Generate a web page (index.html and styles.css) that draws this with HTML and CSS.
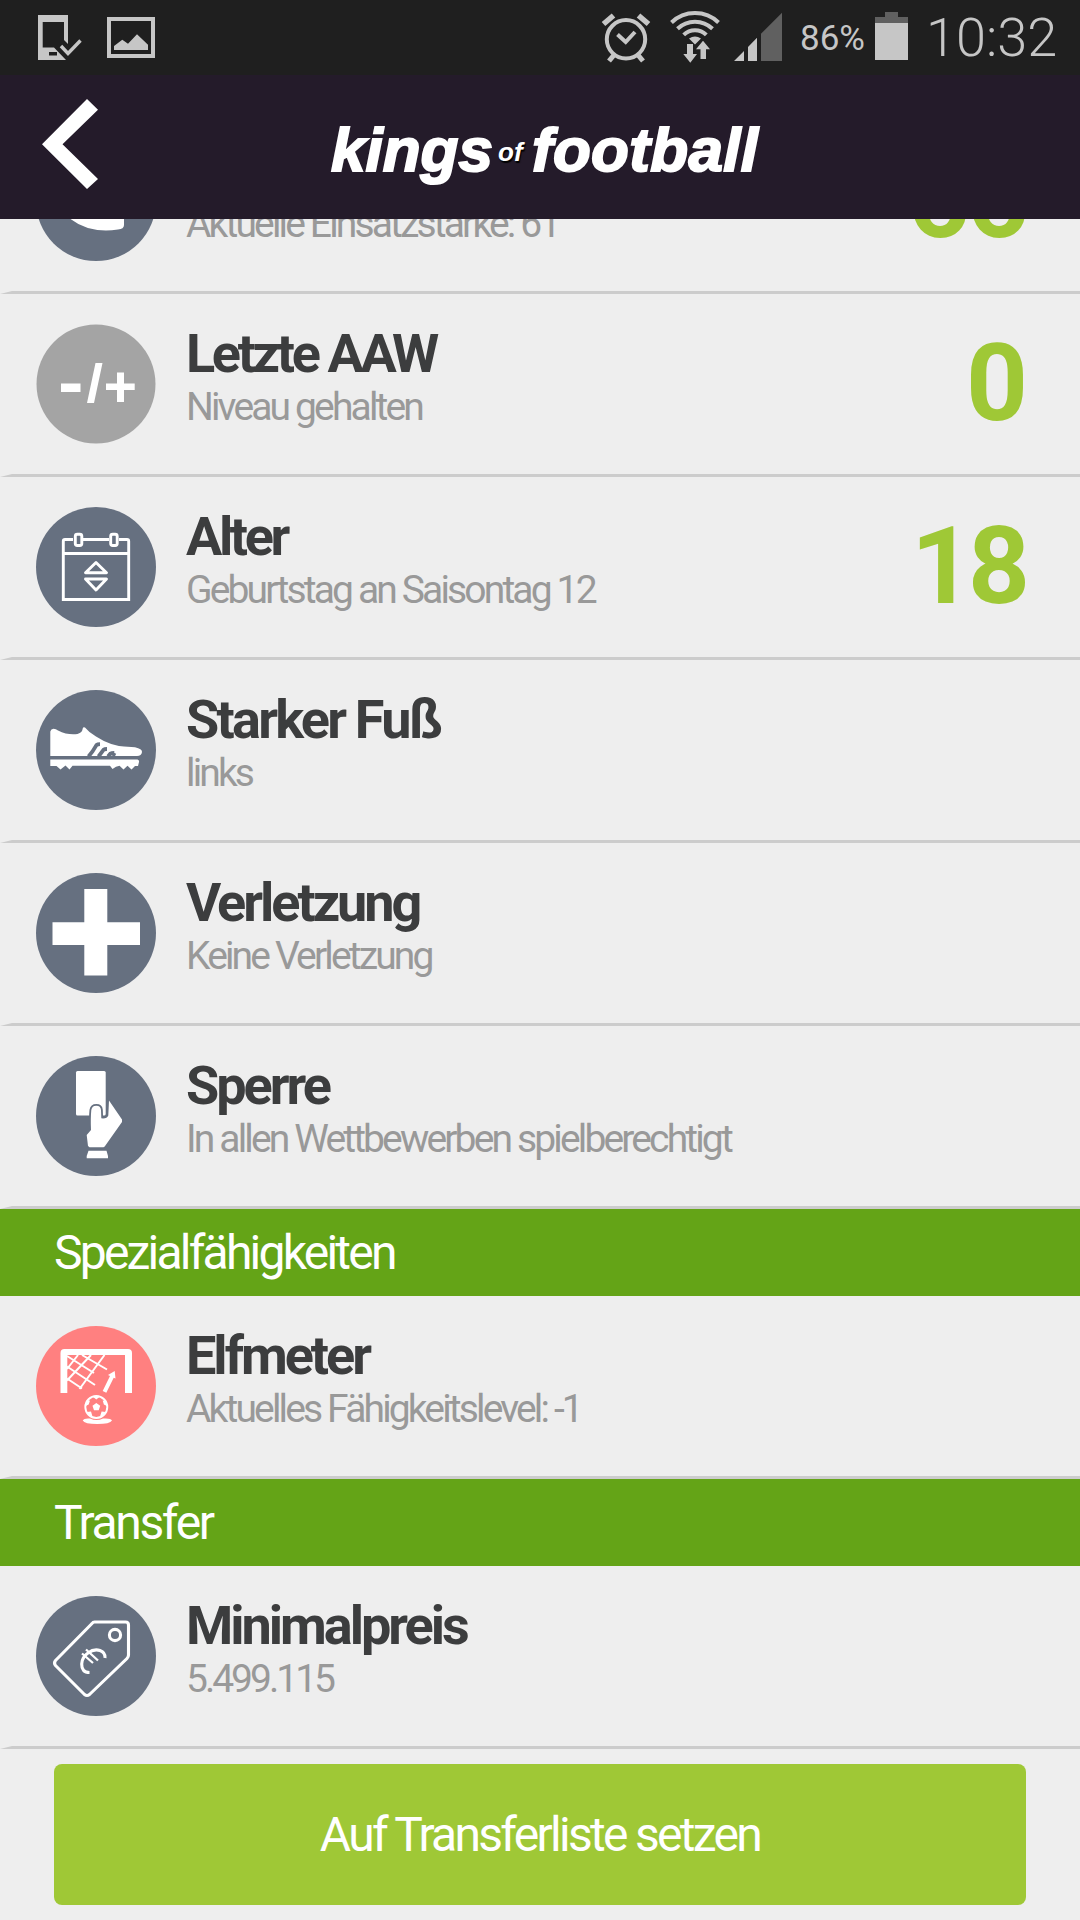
FILE: index.html
```html
<!DOCTYPE html>
<html lang="de">
<head>
<meta charset="utf-8">
<title>Kings of Football</title>
<link rel="stylesheet" href="styles.css">
</head>
<body>
<div class="screen">
  <div class="statusbar">
    <svg class="status-left" width="180" height="75" viewBox="0 0 180 75">
      <path fill="#c6c6c6" fill-rule="evenodd" d="M38 15H68V44L64 40V22H42.7V47.500H54L66 60H38ZM49 52V55.500H57V52Z"/>
      <path fill="none" stroke="#c6c6c6" stroke-width="3.400" d="M61 46L68 53.500L80.500 40.500"/>
      <rect x="109" y="19" width="44" height="37" fill="none" stroke="#c6c6c6" stroke-width="4"/>
      <path fill="#c6c6c6" d="M114 50V46L122.300 39.700L128 43.700L137 34.300L148 44.700V50Z"/>
    </svg>
    <div class="status-right">
      <svg width="185" height="75" viewBox="600 0 185 75">
        <g fill="none" stroke="#c6c6c6">
          <circle cx="626" cy="39.300" r="19.200" stroke-width="4"/>
          <path stroke-width="4" d="M617.500 34.500L625.700 42L635 32"/>
          <path stroke-width="5.500" d="M603.500 24L613.500 15.500M648.500 24L638.500 15.500"/>
          <path stroke-width="5" d="M614 55L609 61M638 55L643 61"/>
          <path stroke-width="4" d="M671.500 22.500A34 34 0 0 1 718.500 22.500M677.500 28.800A25.200 25.200 0 0 1 712.500 28.800M683.700 34.800A16 16 0 0 1 706.300 34.800"/>
        </g>
        <path fill="#c6c6c6" d="M689 38.500Q695 34.500 701 38.500L695 44.500ZM687 44H693V54H697L690.300 62.700L683.300 54H687ZM703 40.700L710 49.300H706V59H700.500V49.300H696ZM734 61L744 51V61ZM748 61V47L757 37.700V61Z"/>
        <path fill="#606060" d="M761 61V33.700L782 12.700V61Z"/>
      </svg>
      <span class="battery-level">86%</span>
      <svg class="battery" width="33" height="75" viewBox="0 0 33 75">
        <path fill="#606060" d="M10 12H23V17H33V23H0V17H10Z"/>
        <path fill="#c6c6c6" d="M0 23H33V60H0Z"/>
      </svg>
      <span class="clock">10:32</span>
    </div>
  </div>

  <div class="header">
    <svg class="back" width="64" height="144" viewBox="36 75 64 144"><path fill="#fff" d="M87 99L98 109.700L62.500 144.300L98 179L87 189L42 144.300Z"/></svg>
    <div class="logo"><span class="logo-kings">kings</span><span class="logo-of">of</span><span class="logo-football">football</span></div>
  </div>

  <div class="list">
    <div class="row row-scrolled">
      <svg class="icon" viewBox="0 0 120 120"><circle cx="60" cy="60" r="60" fill="#667080"/><path fill="#fff" d="M28 72Q60 76 88 74V84Q88 88 82 88.500Q52 93 32 76Z"/></svg>
      <div class="label"><div class="title">&nbsp;</div><div class="sub">Aktuelle Einsatzstärke: 61</div></div>
      <div class="value">66</div>
    </div>
    <div class="row">
      <svg class="icon" viewBox="0 0 120 120"><circle cx="60" cy="60" r="59.500" fill="#a4a4a4"/><path fill="#fff" d="M25 59.500H44.500V68H25ZM59.500 39H66.500L58 79H51ZM70 59.500H81V48.500H88V59.500H98.700V66H88V78H81V66H70Z"/></svg>
      <div class="label"><div class="title title-tight">Letzte AAW</div><div class="sub">Niveau gehalten</div></div>
      <div class="value value-zero">0</div>
    </div>
    <div class="row">
      <svg class="icon" viewBox="0 0 120 120"><circle cx="60" cy="60" r="60" fill="#667080"/>
        <g fill="none" stroke="#fff" stroke-width="2.900">
          <path d="M37 32.500H29Q27.300 32.500 27.300 34.200V92.500H92.700V34.200Q92.700 32.500 91 32.500H83M47 32.500H73M27.300 46.500H92.700"/>
          <rect x="39.300" y="27.200" width="6.500" height="11.300" rx="2"/><rect x="74.700" y="27.200" width="6.500" height="11.300" rx="2"/>
          <path stroke-linejoin="round" d="M60 55.500L70.500 65.800H49.500ZM60 83L70.500 72H49.500Z"/>
        </g></svg>
      <div class="label"><div class="title title-tight">Alter</div><div class="sub">Geburtstag an Saisontag 12</div></div>
      <div class="value value-narrow">18</div>
    </div>
    <div class="row">
      <svg class="icon" viewBox="0 0 120 120"><circle cx="60" cy="60" r="60" fill="#667080"/>
        <path fill="#fff" d="M14.300 66V41.500Q15 39 17.500 38.800Q20 38.800 22 40.500Q32 45.500 41.500 44Q46.500 42.500 46.700 38.500Q47.300 36.500 49 37.500Q53 42.500 60 46.500Q74 55.500 88 56.500L99 57.300Q106.300 59 106 62Q105.500 66 101 66Z"/>
        <path fill="none" stroke="#667080" stroke-width="3.800" d="M52.500 66.500L56.500 61.500L60.500 55Q61.500 54.200 64 54.200M62.500 66.500L67.500 59.800Q68.500 59 71 59M72 66.500L74.500 63.500Q75.500 62.800 78.300 62.800M77 66L78.500 63"/>
        <path fill="#fff" d="M14.300 69.500H101.500Q103.500 70 103 72L102 76H99L95.500 79.500L91.500 75.700L87.500 79.500L83.500 75.700Q80 76 76.500 79L74 75.700H36.500L33.500 79.500L29.500 75.500L24.500 79.500L20.500 76H14.300Z"/></svg>
      <div class="label"><div class="title title-loose">Starker Fuß</div><div class="sub">links</div></div>
    </div>
    <div class="row">
      <svg class="icon" viewBox="0 0 120 120"><circle cx="60" cy="60" r="60" fill="#667080"/><path fill="#fff" d="M48.300 16H71.300V49.300H104V72H71.300V102.500H48.300V72H16.500V49.300H48.300Z"/></svg>
      <div class="label"><div class="title">Verletzung</div><div class="sub">Keine Verletzung</div></div>
    </div>
    <div class="row">
      <svg class="icon" viewBox="0 0 120 120"><circle cx="60" cy="60" r="60" fill="#667080"/>
        <rect x="40" y="15" width="29.700" height="44.600" rx="1.500" fill="#fff"/>
        <path fill="#fff" stroke="#667080" stroke-width="3.600" paint-order="stroke" d="M55 74Q54.500 62 55.300 54Q56 49.700 60.300 49.700Q64.700 49.700 65 54L65.300 62.300Q71 63 72.300 59.500L73 44.500L86 63.500V66L68.700 90.500L67.500 91.300H53.500L52 90L50.700 79Z"/>
        <path fill="#fff" d="M52.500 94.700H70.500L72 100V102.300H50.700V100Z"/></svg>
      <div class="label"><div class="title">Sperre</div><div class="sub">In allen Wettbewerben spielberechtigt</div></div>
    </div>
    <div class="section">Spezialfähigkeiten</div>
    <div class="row">
      <svg class="icon" viewBox="0 0 120 120"><circle cx="60" cy="60" r="60" fill="#ff8080"/>
        <path fill="#fff" d="M24.500 67V27Q24.500 23 28.500 23H92Q96 23 96 27V67H89V29H31.300V67Z"/>
        <path fill="none" stroke="#fff" stroke-width="2" d="M31 30L58 47M46 29L71 43.500M31 40.500L59 59M31 52.500L46 62.500M31 43L42 29M31 54.500L55 29M43.500 63L68.500 29"/>
        <path fill="#fff" d="M66.700 65L74 50L72 49L78.700 45L79.500 52.500L77.700 51.700L70.300 66.700Z"/>
        <circle cx="60.300" cy="81" r="11" fill="none" stroke="#fff" stroke-width="1.900"/>
        <path fill="#fff" d="M60.300 77L64.200 79.800L62.700 84.300H58L56.500 79.800ZM56.500 70.500H64L60.300 73.500ZM49.500 80L50.500 75L54 74.500L52.700 78.500ZM71 80L70 75L66.700 74.500L67.900 78.500ZM51 86L55 85.500L56.500 90.500H54.500ZM69.600 86L65.600 85.500L64 90.500H66Z"/>
        <path fill="#fff" d="M46.700 94.500Q48 92 54 92.500Q60.500 95.500 67 92.500Q75 92 76 94.500Q74 98 61.300 98Q48.500 98 46.700 94.500Z"/></svg>
      <div class="label"><div class="title">Elfmeter</div><div class="sub">Aktuelles Fähigkeitslevel: -1</div></div>
    </div>
    <div class="section section-loose">Transfer</div>
    <div class="row">
      <svg class="icon" viewBox="0 0 120 120"><circle cx="60" cy="60" r="60" fill="#667080"/>
        <g fill="none" stroke="#fff" stroke-width="3.100">
          <path stroke-linejoin="round" d="M58.500 26H89.500Q92.500 26 92.500 29V59Q92.500 61 91 62.500L53.500 98.500Q51 100.500 48.500 98.500L19.500 69.500Q17.500 67 19.500 64.500L56 27.500Q57 26 58.500 26Z"/>
          <circle cx="79" cy="39" r="5.600"/>
          <path d="M53.500 76.500Q45.500 76.500 45.700 68Q46 61 52 57Q58 52.500 64 54.500Q69.500 56.500 69 62"/>
          <path stroke-width="2.300" d="M46 57.500L57 67M50 53.500L62 64.500"/>
        </g></svg>
      <div class="label"><div class="title">Minimalpreis</div><div class="sub sub-digits">5.499.115</div></div>
    </div>
    <div class="button">Auf Transferliste setzen</div>
  </div>
</div>
</body>
</html>
```
FILE: styles.css
```css
* { box-sizing: border-box; }
body {
  margin: 0;
  background: #eee;
  font-family: Roboto, sans-serif;
}
svg { display: block; flex: none; }
.screen {
  width: 1080px;
  height: 1920px;
  overflow: hidden;
  display: flex;
  flex-direction: column;
}

/* Android status bar */
.statusbar {
  height: 75px;
  flex: none;
  background: #1f1f1f;
  color: #c6c6c6;
  display: flex;
  justify-content: space-between;
}
.status-right {
  display: flex;
  padding-right: 38px;
}
.battery-level {
  width: 75px;
  margin-left: 15px;
  font-size: 35px;
  line-height: 78px;
}
.clock {
  width: 134px;
  padding-left: 18px;
  font-size: 54px;
  font-weight: 300;
  line-height: 75px;
  white-space: nowrap;
}

/* App header */
.header {
  height: 144px;
  flex: none;
  padding-left: 36px;
  background: #241b2a;
  display: flex;
}
.logo {
  display: flex;
  align-items: baseline;
  margin-left: 231px;
  height: 144px;
  color: #fff;
  font: italic bold 62px/149px "Liberation Sans", Arial, sans-serif;
  -webkit-text-stroke: 2px #fff;
}
.logo-kings { width: 167px; }
.logo-of {
  width: 34px;
  font-size: 26px;
  line-height: 154px;
  align-self: flex-start;
  text-shadow: 1px 2px 1px #000;
  -webkit-text-stroke: 0;
}
.logo-football { letter-spacing: 0.300px; }

/* Player attributes */
.list {
  flex: 1;
  overflow: hidden;
}
.row {
  height: 183px;
  padding-left: 24px;
  border-left: 12px solid transparent;
  border-bottom: 3px solid #ccc;
  display: flex;
}
.row-scrolled { margin-top: -108px; }
.icon {
  width: 120px;
  height: 120px;
  margin-top: 30px;
}
.label {
  flex: 1;
  padding: 28px 0 0 30px;
  white-space: nowrap;
}
.title {
  color: #3c3d3e;
  font-size: 54px;
  font-weight: 700;
  line-height: 64px;
  letter-spacing: -3.020px;
}
.title-tight { letter-spacing: -3.350px; }
.title-loose { letter-spacing: -2.750px; }
.sub {
  color: #999;
  font-size: 39px;
  line-height: 42px;
  letter-spacing: -2.850px;
}
.sub-digits { letter-spacing: -3px; }
.value {
  padding-right: 54px;
  color: #9fc836;
  font-size: 108px;
  font-weight: 700;
  line-height: 178px;
  letter-spacing: -3px;
}
.value-zero { padding-right: 55px; }
.value-narrow {
  padding-right: 55px;
  letter-spacing: -5px;
}
.section {
  height: 87px;
  padding-left: 54px;
  background: #64a417;
  color: #fff;
  font-size: 48px;
  line-height: 87px;
  letter-spacing: -2.780px;
}
.section-loose { letter-spacing: -2.350px; }
.button {
  height: 141px;
  margin: 15px 54px 0;
  border-radius: 8px;
  background: #9fc836;
  color: #fff;
  font-size: 48px;
  line-height: 141px;
  letter-spacing: -2.700px;
  text-align: center;
}
```
